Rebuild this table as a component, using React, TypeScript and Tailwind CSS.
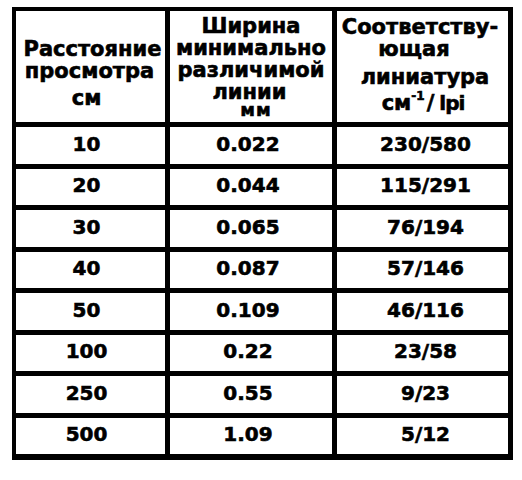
import React from "react";

const rows: [string, string, string][] = [
  ["10", "0.022", "230/580"],
  ["20", "0.044", "115/291"],
  ["30", "0.065", "76/194"],
  ["40", "0.087", "57/146"],
  ["50", "0.109", "46/116"],
  ["100", "0.22", "23/58"],
  ["250", "0.55", "9/23"],
  ["500", "1.09", "5/12"],
];

export default function App() {
  return (
    <div className="w-[522px] h-[480px] bg-white text-black font-['DejaVu_Sans',sans-serif] font-bold [-webkit-text-stroke:0.6px_black]">
      <div className="pt-[7px] pl-[12px]">
        <div className="w-[501px] grid grid-cols-[149px_162px_171px] grid-rows-[111px_37px_36px_37px_36px_37px_36px_37px_36px] gap-[5px] bg-black pl-[4px] pt-[4px] pr-[5px] pb-[6px]">
          {/* header col 1 */}
          <div className="bg-white flex flex-col items-center pt-[27px] text-[21px] leading-[22px]">
            <div className="pl-[4px]">Расстояние</div>
            <div className="pr-[2px]">просмотра</div>
            <div className="mt-[5px] pr-[8px]">см</div>
          </div>
          {/* header col 2 */}
          <div className="bg-white flex flex-col items-center pt-[4px] text-[21px] leading-[22px]">
            <div>Ширина</div>
            <div>минимально</div>
            <div>различимой</div>
            <div className="pr-[3px]">линии</div>
            <div className="ml-[10px] text-[18px] leading-[13px] tracking-[1px]">мм</div>
          </div>
          {/* header col 3 */}
          <div className="bg-white flex flex-col items-center pt-[5px] text-[21px] leading-[22px]">
            <div className="pr-[5px]">Соответству-</div>
            <div className="pr-[17px]">ющая</div>
            <div className="mt-[6px] pl-[5px]">линиатура</div>
            <div className="mt-[4px] flex items-baseline pl-[1px]">
              <span>см</span>
              <span className="relative top-[-10px] text-[12px] leading-none">-1</span>
              <span className="ml-[2px]">/</span>
              <span className="ml-[5px] text-[20px] tracking-[-1px]">lpi</span>
            </div>
          </div>
          {rows.map(([a, b, c]) => (
            <React.Fragment key={a}>
              <div className="bg-white flex items-center justify-center pr-[8px] pb-[4px] text-[20px] leading-none">
                {a}
              </div>
              <div className="bg-white flex items-center justify-center pr-[6px] pb-[4px] text-[20px] leading-none">
                {b}
              </div>
              <div className="bg-white flex items-center justify-center pl-[6px] pb-[4px] text-[20px] leading-none">
                {c}
              </div>
            </React.Fragment>
          ))}
        </div>
      </div>
    </div>
  );
}
